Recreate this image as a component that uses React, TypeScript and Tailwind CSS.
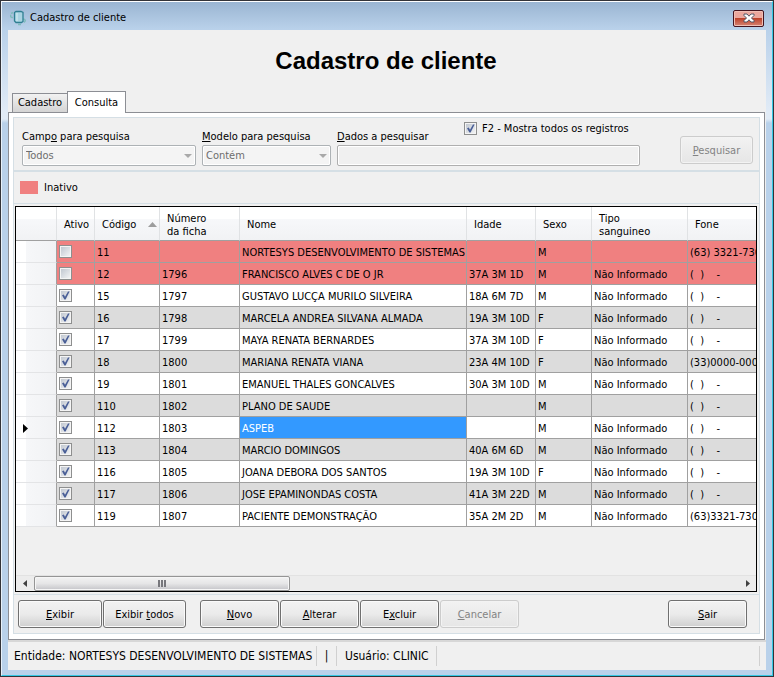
import type { ReactNode } from "react";
import { clsx } from "clsx";

interface Cliente {
  ativo: boolean;
  codigo: string;
  ficha: string;
  nome: string;
  idade: string;
  sexo: string;
  tipo: string;
  fone: string;
}

const SEM_FONE = "(  )    -";
const NAO_INFORMADO = "Não Informado";

const CLIENTES: Cliente[] = [
  { ativo: false, codigo: "11", ficha: "", nome: "NORTESYS DESENVOLVIMENTO DE SISTEMAS", idade: "", sexo: "M", tipo: "", fone: "(63) 3321-7300" },
  { ativo: false, codigo: "12", ficha: "1796", nome: "FRANCISCO ALVES C DE O JR", idade: "37A 3M 1D", sexo: "M", tipo: NAO_INFORMADO, fone: SEM_FONE },
  { ativo: true, codigo: "15", ficha: "1797", nome: "GUSTAVO LUCÇA MURILO SILVEIRA", idade: "18A 6M 7D", sexo: "M", tipo: NAO_INFORMADO, fone: SEM_FONE },
  { ativo: true, codigo: "16", ficha: "1798", nome: "MARCELA ANDREA SILVANA ALMADA", idade: "19A 3M 10D", sexo: "F", tipo: NAO_INFORMADO, fone: SEM_FONE },
  { ativo: true, codigo: "17", ficha: "1799", nome: "MAYA RENATA BERNARDES", idade: "37A 3M 10D", sexo: "F", tipo: NAO_INFORMADO, fone: SEM_FONE },
  { ativo: true, codigo: "18", ficha: "1800", nome: "MARIANA RENATA VIANA", idade: "23A 4M 10D", sexo: "F", tipo: NAO_INFORMADO, fone: "(33)0000-0000" },
  { ativo: true, codigo: "19", ficha: "1801", nome: "EMANUEL THALES GONCALVES", idade: "30A 3M 10D", sexo: "M", tipo: NAO_INFORMADO, fone: SEM_FONE },
  { ativo: true, codigo: "110", ficha: "1802", nome: "PLANO DE SAUDE", idade: "", sexo: "M", tipo: "", fone: SEM_FONE },
  { ativo: true, codigo: "112", ficha: "1803", nome: "ASPEB", idade: "", sexo: "M", tipo: NAO_INFORMADO, fone: SEM_FONE },
  { ativo: true, codigo: "113", ficha: "1804", nome: "MARCIO DOMINGOS", idade: "40A 6M 6D", sexo: "M", tipo: NAO_INFORMADO, fone: SEM_FONE },
  { ativo: true, codigo: "116", ficha: "1805", nome: "JOANA DEBORA DOS SANTOS", idade: "19A 3M 10D", sexo: "F", tipo: NAO_INFORMADO, fone: SEM_FONE },
  { ativo: true, codigo: "117", ficha: "1806", nome: "JOSE EPAMINONDAS COSTA", idade: "41A 3M 22D", sexo: "M", tipo: NAO_INFORMADO, fone: SEM_FONE },
  { ativo: true, codigo: "119", ficha: "1807", nome: "PACIENTE DEMONSTRAÇÃO", idade: "35A 2M 2D", sexo: "M", tipo: NAO_INFORMADO, fone: "(63)3321-7300" },
];

const SELECIONADO = "112";

const CELL = "h-[22px] border-r border-b border-[#a0a0a0] px-[2px] pt-[2px] whitespace-pre";

function Tick({ checked, id, label }: { checked: boolean; id?: string; label?: string }) {
  return (
    <span className="grid size-[13px] shrink-0">
      <input
        id={id}
        type="checkbox"
        defaultChecked={checked}
        aria-label={label}
        className="peer col-start-1 row-start-1 size-[13px] appearance-none border border-[#8e8f8f] bg-linear-to-br from-[#bcc3cd] to-[#f8f8f8] inset-ring inset-ring-[#f4f4f4]"
      />
      <svg
        viewBox="0 0 13 13"
        className="pointer-events-none col-start-1 row-start-1 hidden size-[13px] peer-checked:block"
      >
        <path d="M3 6.2 4.8 5.6 6 7.8 9 2.6 10.6 2.6 6.6 10.4 5.4 10.4Z" fill="#4a5f97" />
      </svg>
    </span>
  );
}

function Button({ className, disabled, children }: { className: string; disabled?: boolean; children: ReactNode }) {
  return (
    <button
      type="button"
      disabled={disabled}
      className={clsx(
        "h-7 rounded-[3px] border pt-[2px] inset-ring",
        disabled
          ? "border-[#cccccc] bg-linear-to-b from-[#f2f2f2] to-[#e6e6e6] text-[#838383] inset-ring-[#f3f3f3]"
          : "border-[#707070] bg-linear-to-b from-[#f2f2f2] from-0% via-[#ebebeb] via-50% to-[#cfcfcf] inset-ring-[#fafafa]",
        className,
      )}
    >
      {children}
    </button>
  );
}

function Combo({ id, value, label, className }: { id: string; value: string; label: ReactNode; className: string }) {
  return (
    <div className={className}>
      <label htmlFor={id} className="block leading-4">
        {label}
      </label>
      <div className="grid items-center">
        <select
          id={id}
          disabled
          className="col-start-1 row-start-1 h-[21px] w-full appearance-none rounded-[2px] border border-[#adb2b5] bg-[#f4f4f4] px-[3px] pt-px text-[#6d6d6d] opacity-100 inset-ring inset-ring-white"
        >
          <option>{value}</option>
        </select>
        <svg viewBox="0 0 8 4" className="pointer-events-none col-start-1 row-start-1 mr-1 h-1 w-2 justify-self-end">
          <path d="M0 0H8L4 4Z" fill="#a9a9a9" />
        </svg>
      </div>
    </div>
  );
}

function TitleBar() {
  return (
    <header className="flex h-7 shrink-0 items-center px-[2px] pt-1">
      <svg viewBox="0 0 16 16" className="size-4" fill="none">
        <path
          d="M1 3.500 3 2.500M1 5C0 6 1 8 3 7.500M13 9C15.500 9 16 11 14 12.500M8 14.500 11 14.500"
          stroke="#7fbcbc"
          strokeWidth="1.500"
        />
        <path d="M4.500 2.500 6 1.500H11L13 2.500V11.500L11.500 12.500H6L4.500 11Z" fill="#a9d3e2" stroke="#2f7f92" strokeWidth="1.300" />
        <path d="M7 3V11" stroke="#d8eef2" />
      </svg>
      <span className="ml-1 pb-px">Cadastro de cliente</span>
      <button
        type="button"
        aria-label="Fechar"
        className="ml-auto grid h-[17px] w-[31px] place-items-center rounded-[2px] border border-[#43141f] bg-linear-to-b from-[#eba79d] from-45% via-[#bd412a] via-50% to-[#d58271] inset-ring inset-ring-[#f0beb4]"
      >
        <svg viewBox="0 0 12 10" className="h-[10px] w-3">
          <path
            d="M1 1H4L6 3.200 8 1H11V2.500L8.500 5 11 7.500V9H8L6 6.800 4 9H1V7.500L3.500 5 1 2.500Z"
            fill="#fff"
            stroke="#535666"
          />
        </svg>
      </button>
    </header>
  );
}

function Pesquisa() {
  return (
    <div className="flex h-[54px] border border-[#d5dfe5] bg-[#f0f0f0] pl-2">
      <Combo id="campo" value="Todos" label={<>Camp<u>o</u> para pesquisa</>} className="w-[174px] pt-[11px]" />
      <Combo id="modelo" value="Contém" label={<><u>M</u>odelo para pesquisa</>} className="ml-[6px] w-[129px] pt-[11px]" />
      <div className="ml-[6px] flex-1">
        <div className="flex h-[27px] items-start">
          <label htmlFor="dados" className="w-[127px] pt-[11px] leading-4">
            <u>D</u>ados a pesquisar
          </label>
          <div className="flex items-center gap-[5px] pt-[2px]">
            <Tick id="todos" checked />
            <label htmlFor="todos" className="pt-px leading-4">
              F2 - Mostra todos os registros
            </label>
          </div>
        </div>
        <input
          id="dados"
          type="text"
          disabled
          className="block h-[21px] w-full rounded-[2px] border border-[#afafaf] bg-[#f0f0f0] px-1 inset-ring inset-ring-white"
        />
      </div>
      <Button disabled className="mt-[18px] mr-[6px] ml-10 w-[73px]">
        <u>P</u>esquisar
      </Button>
    </div>
  );
}

function HeaderCell({ className, children }: { className?: string; children?: ReactNode }) {
  return (
    <th
      scope="col"
      className={clsx(
        "h-[34px] border-r border-b border-r-[#e0e2e4] border-b-[#a0a0a0] bg-linear-to-b from-white from-35% via-[#f7f8fa] via-36% to-[#f1f2f4] pt-[2px] pr-[6px] pl-[7px] text-left leading-[13px] font-normal",
        className,
      )}
    >
      {children}
    </th>
  );
}

function Grade() {
  return (
    <table className="w-[762px] table-fixed border-separate border-spacing-0">
      <colgroup>
        <col className="w-[41px]" />
        <col className="w-[38px]" />
        <col className="w-[65px]" />
        <col className="w-[80px]" />
        <col className="w-[227px]" />
        <col className="w-[69px]" />
        <col className="w-[56px]" />
        <col className="w-[96px]" />
        <col className="w-[90px]" />
      </colgroup>
      <thead>
        <tr>
          <HeaderCell className="border-r-[#a0a0a0]" />
          <HeaderCell>Ativo</HeaderCell>
          <HeaderCell>
            <span className="flex items-center justify-between">
              Código
              <svg viewBox="0 0 9 5" className="-mr-1 h-[5px] w-[9px] shrink-0">
                <path d="M0 5 4.500 0 9 5Z" fill="#9d9d9d" />
              </svg>
            </span>
          </HeaderCell>
          <HeaderCell>
            Número
            <br />
            da ficha
          </HeaderCell>
          <HeaderCell>Nome</HeaderCell>
          <HeaderCell>Idade</HeaderCell>
          <HeaderCell>Sexo</HeaderCell>
          <HeaderCell>
            Tipo
            <br />
            sanguineo
          </HeaderCell>
          <HeaderCell>Fone</HeaderCell>
        </tr>
      </thead>
      <tbody>
        {CLIENTES.map((c, i) => {
          const selected = c.codigo === SELECIONADO;
          return (
            <tr key={c.codigo} className={clsx(!c.ativo ? "bg-[#f08080]" : i % 2 ? "bg-[#dcdcdc]" : "bg-white")}>
              <th
                scope="row"
                className="h-[22px] border-r border-b border-r-[#a0a0a0] border-b-[#e3e4e6] bg-linear-to-r from-white from-25% via-[#f6f7f9] via-26% to-[#f1f2f4] pt-[2px] pl-[7px]"
              >
                {selected && (
                  <svg viewBox="0 0 5 9" className="h-[9px] w-[5px]">
                    <path d="M0 0 5 4.500 0 9Z" fill="#000" />
                  </svg>
                )}
              </th>
              <td className="h-[22px] border-r border-b border-[#a0a0a0] px-[2px]">
                <Tick checked={c.ativo} label={`Ativo ${c.codigo}`} />
              </td>
              <td className={CELL}>{c.codigo}</td>
              <td className={CELL}>{c.ficha}</td>
              <td className={clsx(CELL, selected && "bg-[#3399ff] text-white")}>{c.nome}</td>
              <td className={CELL}>{c.idade}</td>
              <td className={CELL}>{c.sexo}</td>
              <td className={CELL}>{c.tipo}</td>
              <td className={CELL}>{c.fone}</td>
            </tr>
          );
        })}
      </tbody>
    </table>
  );
}

function BarraRolagem() {
  return (
    <div className="mt-auto flex h-4 items-center border-t border-[#e2e2e2] bg-[#ececec]">
      <button type="button" aria-label="Rolar para a esquerda" className="grid h-full w-[18px] place-items-center">
        <svg viewBox="0 0 4 7" className="h-[7px] w-1">
          <path d="M4 0V7L0 3.500Z" fill="#404040" />
        </svg>
      </button>
      <div className="flex h-[15px] w-[256px] items-center justify-center gap-px rounded-[2px] border border-[#959595] bg-linear-to-b from-[#f3f3f3] from-0% via-[#e6e6e7] via-50% to-[#c4c4c8] inset-ring inset-ring-[#f6f6f6]">
        <span className="h-[7px] w-[2px] bg-[#77777c]" />
        <span className="h-[7px] w-[2px] bg-[#77777c]" />
        <span className="h-[7px] w-[2px] bg-[#77777c]" />
      </div>
      <button type="button" aria-label="Rolar para a direita" className="ml-auto grid h-full w-4 place-items-center">
        <svg viewBox="0 0 4 7" className="h-[7px] w-1">
          <path d="M0 0V7L4 3.500Z" fill="#404040" />
        </svg>
      </button>
    </div>
  );
}

export default function App() {
  return (
    <div className="flex min-h-screen flex-col border border-[#333338] bg-[#b9d1ea] bg-[linear-gradient(180deg,#99b4d1_0px,#b9d1ea_28px,#e1ebf6_110px,#e1ebf6_118px,#b9d1ea_122px)] font-['DejaVu_Sans_Condensed','DejaVu_Sans',sans-serif] text-[11px] leading-[14px] text-black">
      <div className="flex flex-1 flex-col border-t border-r border-b border-l border-t-white border-r-[#35c8e4] border-b-[#35c8e4] border-l-[#e8f1fa] pr-[6px] pb-[5px] pl-[6px]">
        <TitleBar />
        <main className="flex flex-1 flex-col bg-[#f0f0f0]">
          <h1 className="pt-[17px] pr-[2px] text-center font-['Liberation_Sans',Arial,sans-serif] text-[24px] leading-7 font-bold">
            Cadastro de cliente
          </h1>
          <div role="tablist" className="mt-4 flex items-end pl-1">
            <button
              type="button"
              role="tab"
              aria-selected="false"
              className="h-[19px] w-[55px] border border-r-0 border-b-0 border-[#8c8e94] bg-linear-to-b from-[#f2f2f2] to-[#d4d4d4]"
            >
              Cadastro
            </button>
            <button
              type="button"
              role="tab"
              aria-selected="true"
              className="z-10 -mb-px h-[22px] w-[59px] border border-b-0 border-[#8c8e94] bg-white"
            >
              Consulta
            </button>
          </div>
          <section className="mr-px flex flex-1 flex-col border border-[#8c8e94] bg-white p-1 pb-[5px]">
            <Pesquisa />
            <div className="flex h-[33px] items-center border border-[#d5dfe5] bg-[#f0f0f0] pl-[6px]">
              <span className="h-[13px] w-[18px] bg-[#f08080]" />
              <span className="ml-[6px] pt-px">Inativo</span>
            </div>
            <div className="flex flex-1 flex-col border-x border-[#d5dfe5] bg-[#f0f0f0] py-[2px] pr-[2px] pl-px">
              <div className="flex w-full flex-1 flex-col overflow-hidden border border-black">
                <Grade />
                <BarraRolagem />
              </div>
            </div>
            <div className="flex h-10 items-center border border-[#d5dfe5] bg-[#f0f0f0] pr-3 pl-1">
              <Button className="w-[84px]"><u>E</u>xibir</Button>
              <Button className="ml-px w-[83px]">Exibir <u>t</u>odos</Button>
              <Button className="ml-[14px] w-[79px]"><u>N</u>ovo</Button>
              <Button className="ml-px w-[79px]"><u>A</u>lterar</Button>
              <Button className="ml-px w-[79px]">E<u>x</u>cluir</Button>
              <Button disabled className="ml-px w-[79px]"><u>C</u>ancelar</Button>
              <Button className="ml-auto w-[79px]"><u>S</u>air</Button>
            </div>
          </section>
          <footer className="flex h-[30px] items-center border-t-2 border-[#d7d7d7] pl-[6px] text-xs">
            <span className="w-[303px] border-r border-[#d0d0d0] leading-5 whitespace-nowrap">
              Entidade: NORTESYS DESENVOLVIMENTO DE SISTEMAS
            </span>
            <span className="w-5 border-r border-[#d0d0d0] text-center leading-5">|</span>
            <span className="w-[100px] border-r border-[#d0d0d0] pl-2 leading-5">Usuário: CLINIC</span>
            <span className="mr-[6px] ml-auto h-5 border-r border-[#d0d0d0]" />
          </footer>
        </main>
      </div>
    </div>
  );
}
